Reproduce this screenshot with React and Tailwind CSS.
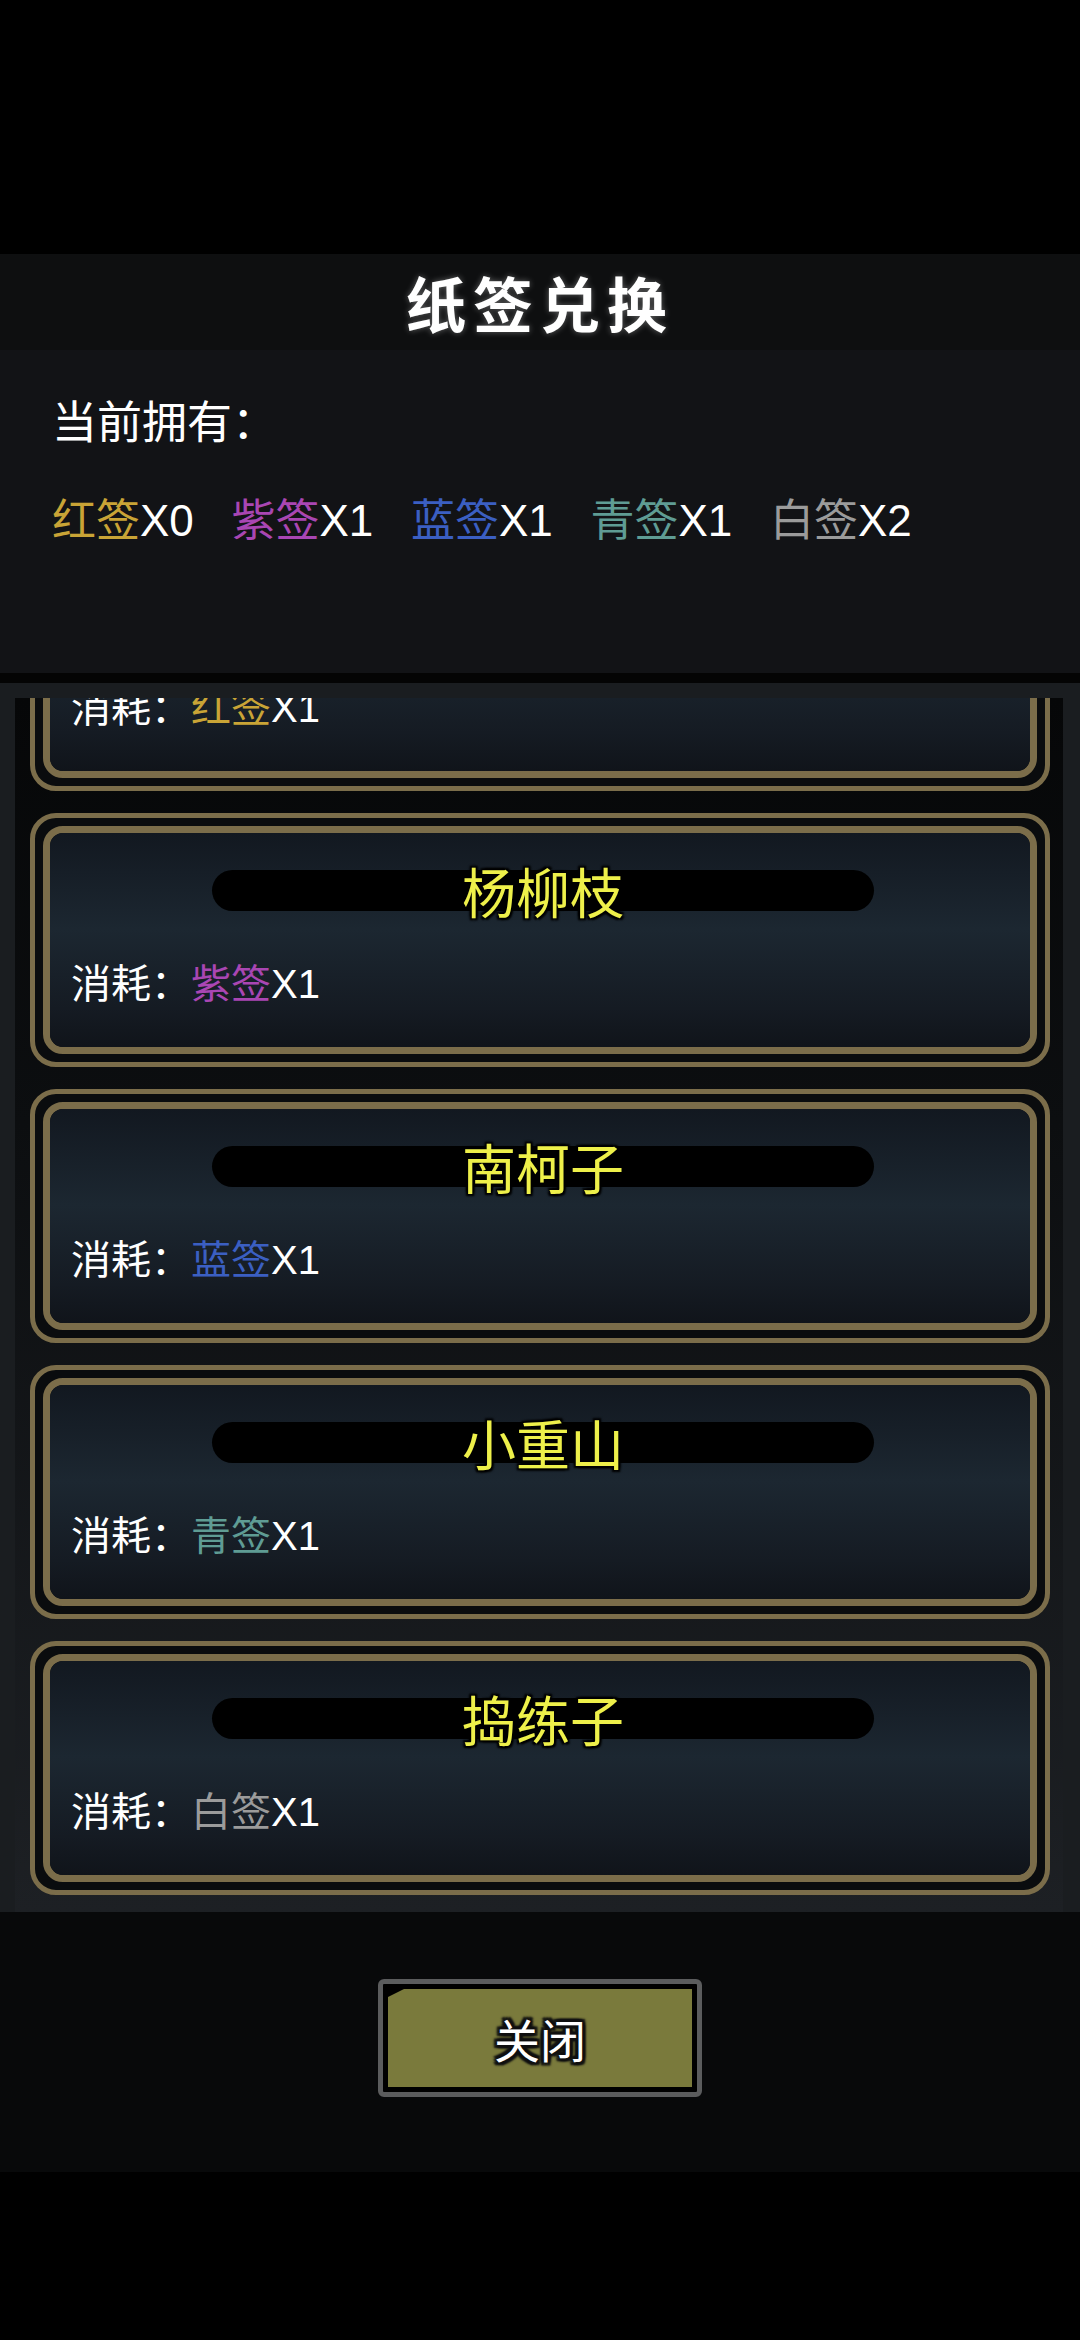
const CJK = "font-['Liberation_Sans','Noto_Sans_CJK_SC',sans-serif]";

const owned = [
  { label: "红签", count: "X0", color: "text-[#c9a436]" },
  { label: "紫签", count: "X1", color: "text-[#a946b3]" },
  { label: "蓝签", count: "X1", color: "text-[#3b5fc2]" },
  { label: "青签", count: "X1", color: "text-[#5f9c94]" },
  { label: "白签", count: "X2", color: "text-[#9b9b9b]" },
];

const cards = [
  { name: "浣溪沙", cost: "红签", color: "text-[#c9a436]" },
  { name: "杨柳枝", cost: "紫签", color: "text-[#a946b3]" },
  { name: "南柯子", cost: "蓝签", color: "text-[#3b5fc2]" },
  { name: "小重山", cost: "青签", color: "text-[#5f9c94]" },
  { name: "捣练子", cost: "白签", color: "text-[#9b9b9b]" },
];

const PoemCard = ({ card }) => (
  <div className="h-[254px] rounded-[26px] border-[5px] border-[#7b6d4a] bg-[#0a0c0e] p-[8px]">
    <div className="h-full rounded-[20px] border-[7px] border-[#7b6d4a]">
      <div className="h-full rounded-[13px] bg-[linear-gradient(to_bottom,#121820,#1c2731_45%,#151b23_82%,#10141a)] pt-[37px] pl-[21px]">
        <div className="ml-[141px] w-[662px] h-[41px] rounded-full bg-black flex items-center justify-center">
          <span className="text-[54px] leading-[41px] text-[#eef04a] font-['Noto_Sans_CJK_SC',sans-serif] [text-shadow:0_0_3px_#000,2px_2px_2px_#000,-2px_-2px_2px_#000,2px_-2px_2px_#000,-2px_2px_2px_#000]">
            {card.name}
          </span>
        </div>
        <p className="mt-[50px] text-[40px] leading-[46px] text-white">
          消耗：<span className={card.color}>{card.cost}</span>X1
        </p>
      </div>
    </div>
  </div>
);

export default function App() {
  return (
    <div className={`w-[1080px] h-[2340px] bg-black flex flex-col ${CJK}`}>
      <div className="h-[254px] shrink-0" />

      <div className="h-[96px] shrink-0 bg-[#0e0f10] flex items-center justify-center">
        <h1 className="text-[60px] font-bold tracking-[7px] text-white font-['Noto_Sans_CJK_SC',sans-serif] [text-shadow:0_0_6px_rgba(255,255,255,0.35)]">
          纸签兑换
        </h1>
      </div>

      <div className="h-[323px] shrink-0 bg-[#121316] pl-[52px] pt-[49px]">
        <p className="text-[45px] leading-[50px] text-white">当前拥有：</p>
        <div className="mt-[47px] flex text-[44px] leading-[50px]">
          {owned.map((t) => (
            <div key={t.label} className="w-[179.5px] shrink-0 whitespace-nowrap">
              <span className={t.color}>{t.label}</span>
              <span className="text-white">{t.count}</span>
            </div>
          ))}
        </div>
      </div>

      <div className="h-[10px] shrink-0 bg-[#040404]" />

      <div className="h-[1229px] shrink-0 bg-[#1a1d20] pt-[15px] pl-[15px] pr-[17px]">
        <div className="h-[1214px] overflow-hidden bg-[linear-gradient(to_bottom,#060708,#0c0e10_35%,#1d2024)]">
          <div className="-mt-[161px] pl-[15px] pr-[13px] flex flex-col gap-[22px]">
            {cards.map((c) => (
              <PoemCard key={c.name} card={c} />
            ))}
          </div>
        </div>
      </div>

      <div className="h-[260px] shrink-0 bg-[#08090a] flex justify-center pt-[67px]">
        <button className="w-[324px] h-[118px] rounded-[6px] border-[5px] border-[#5b5c5d] bg-black p-[5px]">
          <div className="h-full w-full bg-[#7a7a3c] [clip-path:polygon(16px_0,100%_0,100%_100%,0_100%,0_8px)] flex items-center justify-center">
            <span className="text-[46px] leading-none text-white font-['Noto_Sans_CJK_SC',sans-serif] [text-shadow:0_0_2px_#111,3px_3px_2px_#111,-3px_-3px_2px_#111,3px_-3px_2px_#111,-3px_3px_2px_#111,0_3px_2px_#111,0_-3px_2px_#111,3px_0_2px_#111,-3px_0_2px_#111]">
              关闭
            </span>
          </div>
        </button>
      </div>

      <div className="flex-1" />
    </div>
  );
}
